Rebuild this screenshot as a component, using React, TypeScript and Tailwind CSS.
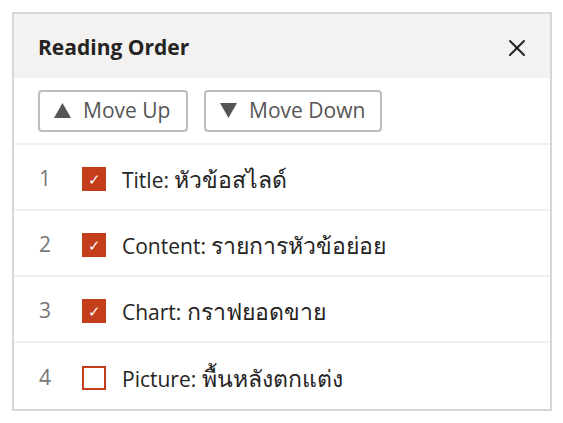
import { X } from 'lucide-react';

const items = [
  { n: 1, head: 'Title:', thai: 'หัวข้อสไลด์', checked: true },
  { n: 2, head: 'Content:', thai: 'รายการหัวข้อย่อย', checked: true },
  { n: 3, head: 'Chart:', thai: 'กราฟยอดขาย', checked: true },
  { n: 4, head: 'Picture:', thai: 'พื้นหลังตกแต่ง', checked: false },
];

function Tri({ down }: { down?: boolean }) {
  return (
    <svg width="17" height="15" viewBox="0 0 17 15" className="fill-[#555]">
      {down ? <polygon points="0,0 17,0 8.5,15" /> : <polygon points="8.5,0 17,15 0,15" />}
    </svg>
  );
}

export default function App() {
  return (
    <div className="w-[563px] h-[423px] bg-white p-3" style={{ fontFamily: '"Open Sans", "Noto Sans", sans-serif' }}>
      <div className="w-[540px] border-2 border-[#d6d6d6] bg-white">
        <div className="h-[64px] bg-[#f3f2f1] flex items-center justify-between pl-6 pr-[19px] pt-1">
          <span className="text-[21px] font-bold text-[#252423]">Reading Order</span>
          <X size={28} strokeWidth={1.7} className="text-[#252423]" />
        </div>
        <div className="h-[67px] flex items-center gap-4 pl-6 border-b-2 border-[#efefef]">
          <button className="h-[42px] w-[150px] pl-[14px] border-2 border-[#bdbdbd] rounded-[4px] text-[21px] text-[#555] flex items-center gap-3">
            <Tri />Move Up
          </button>
          <button className="h-[42px] w-[178px] pl-[14px] border-2 border-[#bdbdbd] rounded-[4px] text-[21px] text-[#555] flex items-center gap-3">
            <Tri down />Move Down
          </button>
        </div>
        {items.map((it, i) => (
          <div
            key={it.n}
            className={`h-[66px] flex items-center pl-[25px] pt-1 ${i < items.length - 1 ? 'border-b-2 border-[#efefef]' : ''}`}
          >
            <span className="w-[43px] text-[21px] text-[#777]">{it.n}</span>
            <span
              className={`w-[24px] h-[24px] flex items-center justify-center ${
                it.checked ? 'bg-[#c43e1c]' : 'border-2 border-[#c43e1c] bg-white'
              }`}
            >
              {it.checked && <span className="text-white text-[15px] leading-none">✓</span>}
            </span>
            <span className="ml-4 text-[21px] text-[#252423]">
              {it.head} <span className="text-[23px]">{it.thai}</span>
            </span>
          </div>
        ))}
      </div>
    </div>
  );
}
